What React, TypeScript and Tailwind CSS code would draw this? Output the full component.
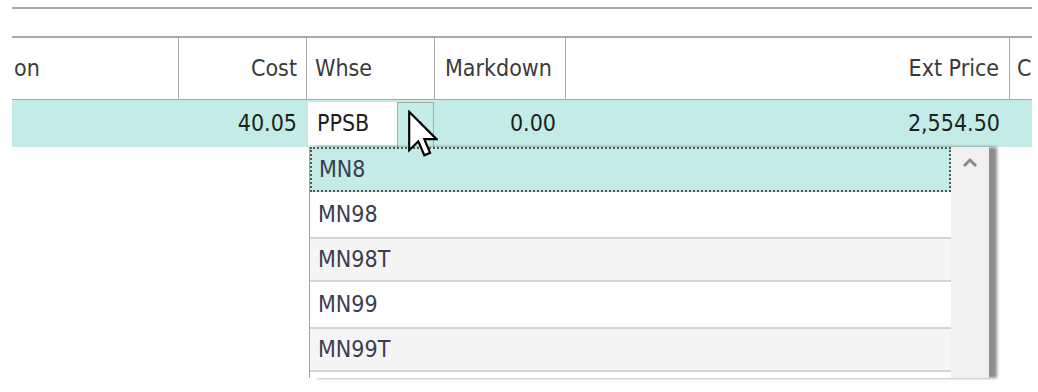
import React from "react";

const F = { fontFamily: "'DejaVu Sans Condensed','DejaVu Sans',sans-serif", fontStretch: "condensed" as const };

function Cursor() {
  return (
    <svg width="30" height="48" viewBox="0 0 12.5 19.5" className="absolute left-[408px] top-[110px]">
      <path
        d="M0.5 0.5 L0.5 16.5 L4.3 12.8 L6.8 18.6 L9.2 17.6 L6.8 11.9 L11.9 11.9 Z"
        fill="#ffffff"
        stroke="#000000"
        strokeWidth="0.9"
        strokeLinejoin="miter"
      />
    </svg>
  );
}

const items = ["MN8", "MN98", "MN98T", "MN99", "MN99T", ""];

export default function App() {
  return (
    <div
      className="relative w-[1038px] h-[392px] bg-white overflow-hidden text-[23px] text-[#2a2a2a]"
      style={F}
    >
      <div className="pl-[12px] pr-[6px] pt-[7px]">
        <div className="h-[2px] bg-[#a9a9a9]" />
        <div className="h-[27px]" />
        {/* header */}
        <div className="flex h-[64px] border-t-2 border-b border-[#a9a9a9] text-[#3a3a3a]">
          <div className="w-[167px] border-r border-[#a9a9a9] flex items-center pl-[2px]">on</div>
          <div className="w-[128px] border-r border-[#a9a9a9] flex items-center justify-end pr-[9px]">Cost</div>
          <div className="w-[128px] border-r border-[#a9a9a9] flex items-center pl-[8px]">Whse</div>
          <div className="w-[131px] border-r border-[#a9a9a9] flex items-center pl-[10px]">Markdown</div>
          <div className="w-[444px] border-r border-[#a9a9a9] flex items-center justify-end pr-[10px]">Ext Price</div>
          <div className="flex-1 flex items-center pl-[7px] overflow-hidden">C</div>
        </div>
        {/* data row */}
        <div className="flex h-[47px] bg-[#c3ebe7] text-[#1e1e1e]">
          <div className="w-[167px]" />
          <div className="w-[128px] flex items-center justify-end pr-[10px]">40.05</div>
          <div className="w-[128px] flex pt-[2px] pl-[1px]">
            <div className="w-[89px] h-[43px] bg-white flex items-center pl-[9px]">PPSB</div>
            <div className="w-[37px] h-[45px] border border-b-0 border-[#a9a9a9] bg-[#c6ece8] flex items-center justify-center">
              <svg width="14" height="10" viewBox="0 0 14 10">
                <path d="M2 2 L7 7 L12 2" fill="none" stroke="#222" strokeWidth="2.5" />
              </svg>
            </div>
          </div>
          <div className="w-[131px] flex items-center justify-end pr-[10px]">0.00</div>
          <div className="w-[444px] flex items-center justify-end pr-[10px]">2,554.50</div>
          <div className="flex-1" />
        </div>
      </div>

      {/* dropdown list */}
      <div className="absolute left-[309px] top-[147px] w-[680px] h-[231px] flex border-l border-[#a0a0a0] bg-white shadow-[8px_0_3px_rgba(0,0,0,0.45)]">
        <div className="w-[641px] flex flex-col overflow-hidden text-[#3b3d4f]">
          {items.map((it, i) => (
            <div
              key={i}
              className={
                i === 0
                  ? "h-[45px] shrink-0 bg-[#c3ebe7] border-2 border-dotted border-[#555] flex items-center pl-[7px]"
                  : i % 2 === 0
                  ? "h-[45px] shrink-0 bg-[#f5f5f5] border-y-2 border-[#d4d4d4] flex items-center pl-[8px]"
                  : "h-[45px] shrink-0 bg-white flex items-center pl-[8px]"
              }
            >
              {it}
            </div>
          ))}
        </div>
        <div className="flex-1 bg-[#f0f0f0] flex justify-center pt-[10px]">
          <svg width="16" height="11" viewBox="0 0 16 11">
            <path d="M2 9 L8 3 L14 9" fill="none" stroke="#8a8a8a" strokeWidth="3" />
          </svg>
        </div>
      </div>

      <Cursor />
    </div>
  );
}
